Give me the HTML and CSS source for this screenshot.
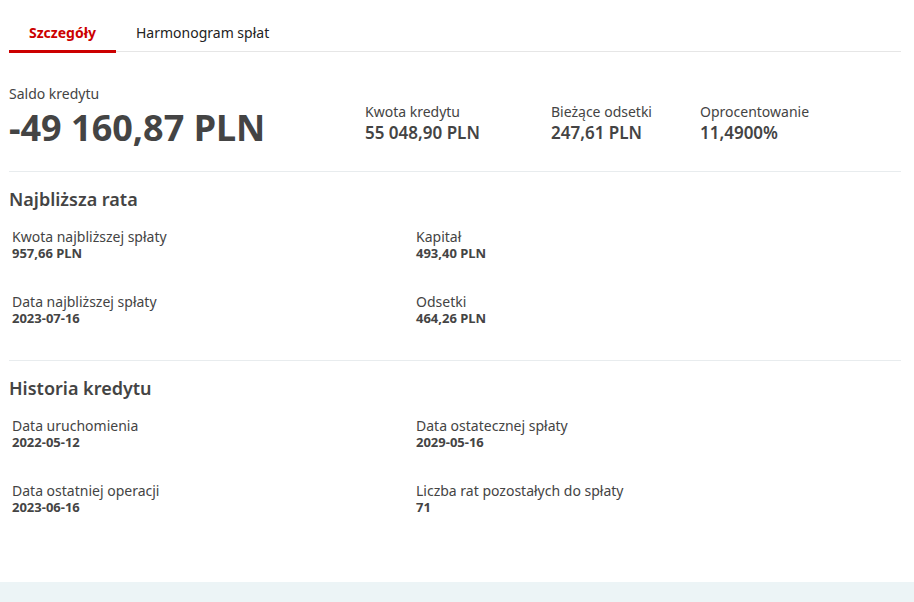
FILE: index.html
```html
<!DOCTYPE html>
<html lang="pl">
<head>
    <meta charset="UTF-8">
    <meta name="viewport" content="width=device-width, initial-scale=1.0">
    <title>Szczegóły kredytu</title>
    <link rel="stylesheet" href="styles.css">
</head>
<body>
    <div class="page">
        <nav class="tabs">
            <a class="tab active" href="#">Szczegóły</a>
            <a class="tab" href="#">Harmonogram spłat</a>
        </nav>

        <section class="summary">
            <div class="stat main">
                <div class="stat-label">Saldo kredytu</div>
                <div class="stat-value">-49 160,87 PLN</div>
            </div>
            <div class="stat kwota">
                <div class="stat-label">Kwota kredytu</div>
                <div class="stat-value">55 048,90 PLN</div>
            </div>
            <div class="stat odsetki">
                <div class="stat-label">Bieżące odsetki</div>
                <div class="stat-value">247,61 PLN</div>
            </div>
            <div class="stat">
                <div class="stat-label">Oprocentowanie</div>
                <div class="stat-value">11,4900%</div>
            </div>
        </section>

        <section class="block">
            <h2>Najbliższa rata</h2>
            <div class="details">
                <div class="item">
                    <div class="item-label">Kwota najbliższej spłaty</div>
                    <div class="item-value">957,66 PLN</div>
                </div>
                <div class="item">
                    <div class="item-label">Kapitał</div>
                    <div class="item-value">493,40 PLN</div>
                </div>
                <div class="item">
                    <div class="item-label">Data najbliższej spłaty</div>
                    <div class="item-value">2023-07-16</div>
                </div>
                <div class="item">
                    <div class="item-label">Odsetki</div>
                    <div class="item-value">464,26 PLN</div>
                </div>
            </div>
        </section>

        <section class="block last">
            <h2>Historia kredytu</h2>
            <div class="details">
                <div class="item">
                    <div class="item-label">Data uruchomienia</div>
                    <div class="item-value">2022-05-12</div>
                </div>
                <div class="item">
                    <div class="item-label">Data ostatecznej spłaty</div>
                    <div class="item-value">2029-05-16</div>
                </div>
                <div class="item">
                    <div class="item-label">Data ostatniej operacji</div>
                    <div class="item-value">2023-06-16</div>
                </div>
                <div class="item">
                    <div class="item-label">Liczba rat pozostałych do spłaty</div>
                    <div class="item-value">71</div>
                </div>
            </div>
        </section>
    </div>
    <footer class="band"></footer>
</body>
</html>
```

FILE: styles.css
```css
body {
    font-family: "Noto Sans", "Open Sans", sans-serif;
    color: #444;
    background-color: #fff;
    margin: 0;
    padding: 0;
}
.page {
    margin: 0 13px 0 9px;
    padding-top: 18px;
    height: 564px;
}
.tabs {
    display: flex;
    border-bottom: 1px solid #e6e6e6;
}
.tab {
    display: block;
    font-size: 14px;
    color: #222;
    text-decoration: none;
    padding: 5px 20px 8px;
    border-bottom: 3px solid transparent;
    margin-bottom: -2px;
}
.tab.active {
    color: #cc0000;
    font-weight: bold;
    border-bottom-color: #cc0000;
}
.summary {
    display: flex;
    align-items: flex-end;
    padding: 32px 0 22px;
    border-bottom: 1px solid #e8ecee;
}
.stat.main {
    width: 356px;
}
.stat.kwota {
    width: 186px;
}
.stat.odsetki {
    width: 149px;
}
.stat-label {
    font-size: 14px;
    line-height: 20px;
}
.stat-value {
    font-size: 17px;
    font-weight: 600;
    line-height: 22px;
    margin-bottom: 5px;
}
.main .stat-value {
    font-size: 36px;
    font-weight: bold;
    line-height: 42px;
    margin-top: 3px;
    margin-bottom: 0;
}
.block {
    padding: 14px 0 34px;
    border-bottom: 1px solid #e8ecee;
}
.block.last {
    border-bottom: none;
}
h2 {
    font-size: 18px;
    font-weight: 600;
    margin: 0 0 17px;
    line-height: 26px;
}
.details {
    display: grid;
    grid-template-columns: 404px 1fr;
    row-gap: 33px;
    padding-left: 3px;
}
.item-label {
    font-size: 14px;
    line-height: 16px;
}
.item-value {
    font-size: 13px;
    font-weight: bold;
    line-height: 16px;
}
.band {
    height: 20px;
    background-color: #ecf4f6;
}
```
